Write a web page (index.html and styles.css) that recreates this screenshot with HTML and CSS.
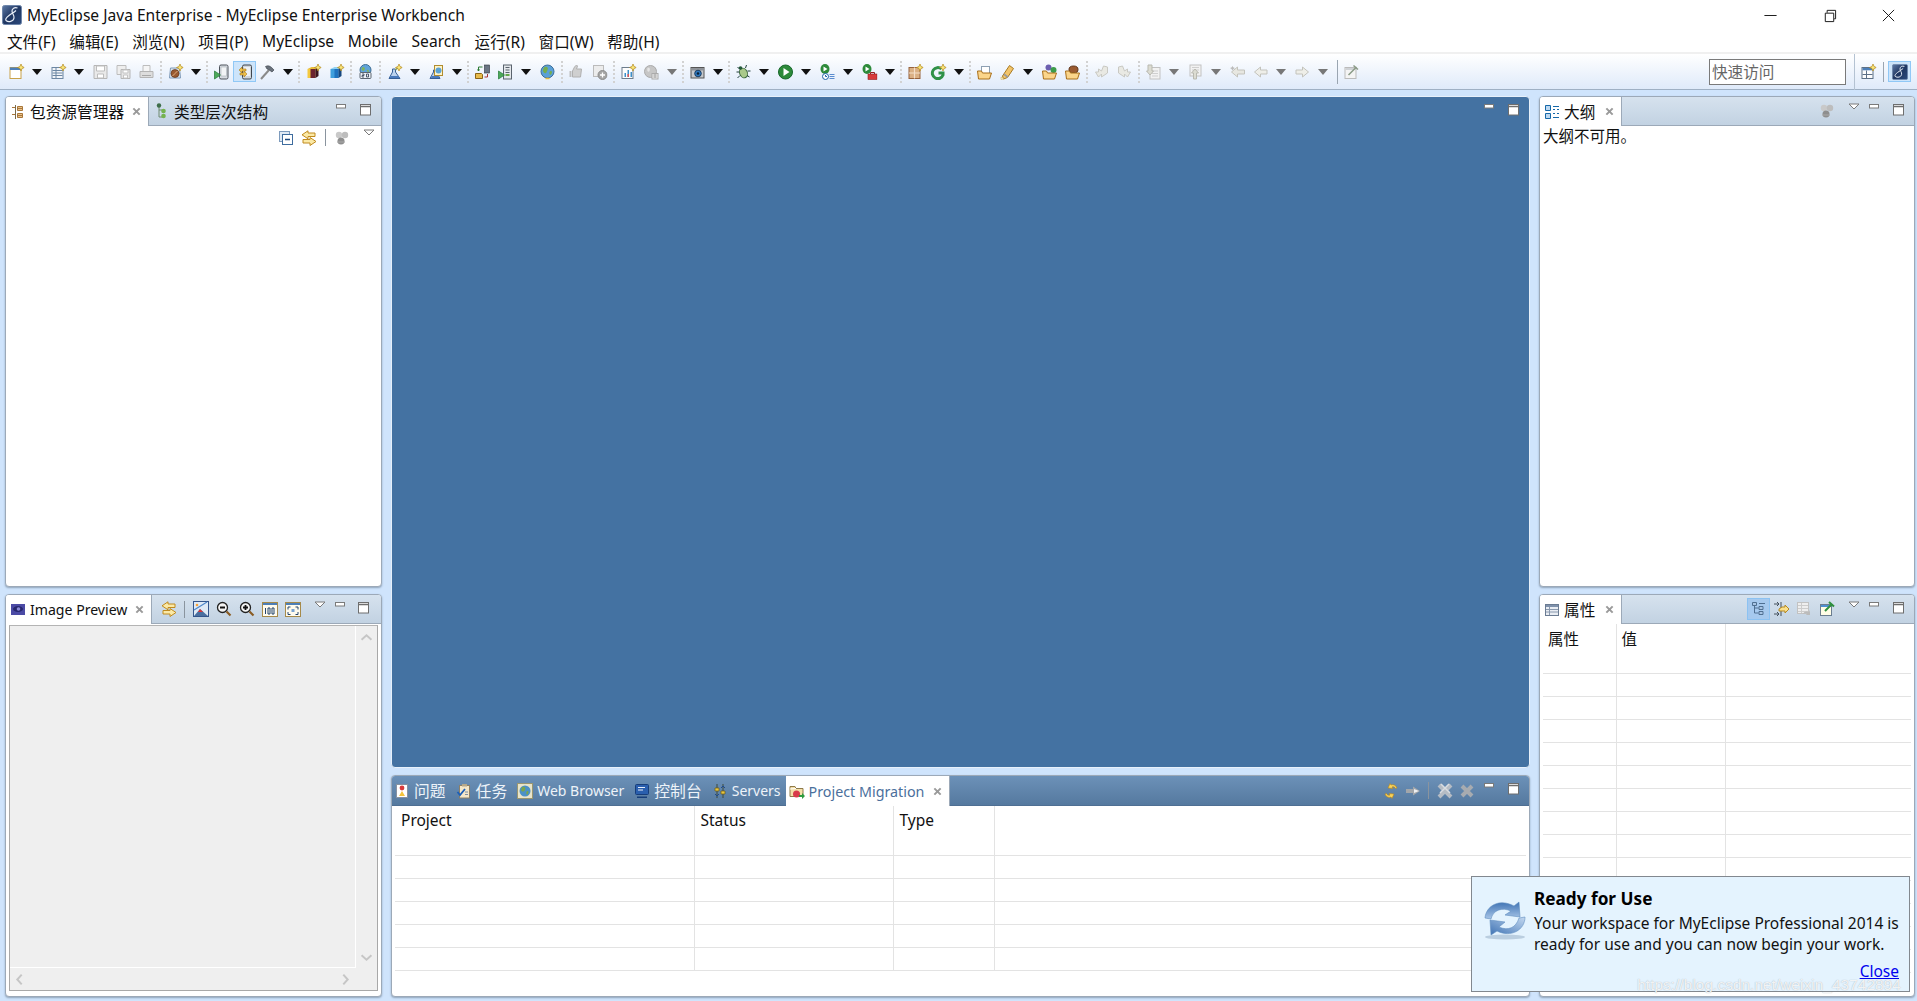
FILE: index.html
```html
<!DOCTYPE html>
<html lang="zh">
<head>
<meta charset="utf-8">
<title>MyEclipse Java Enterprise - MyEclipse Enterprise Workbench</title>
<link rel="stylesheet" href="styles.css">
</head>
<body>
<svg class="sprite" xmlns="http://www.w3.org/2000/svg">
<defs>
<linearGradient id="gBlue" x1="0" y1="0" x2="0" y2="1"><stop offset="0" stop-color="#3f73b4"/><stop offset="1" stop-color="#a9c6e8"/></linearGradient>
<linearGradient id="gBlue2" x1="0" y1="1" x2="1" y2="0"><stop offset="0" stop-color="#3f73b4"/><stop offset="1" stop-color="#c3d8f0"/></linearGradient>
<linearGradient id="gLogo" x1="0" y1="0" x2="1" y2="1"><stop offset="0" stop-color="#5e7aa6"/><stop offset=".5" stop-color="#1f3661"/><stop offset="1" stop-color="#2c4a7c"/></linearGradient>
<symbol id="star" viewBox="0 0 16 16"><path d="M12.5 0l1 2.500 2.500 1-2.500 1-1 2.500-1-2.500-2.500-1 2.500-1z" fill="#fbe77a" stroke="#b58a1e" stroke-width=".7"/></symbol>
<symbol id="new" viewBox="0 0 16 16"><rect x="1.500" y="3.500" width="11" height="11" fill="#fff" stroke="#c9a24a"/><rect x="1.500" y="3.500" width="11" height="2.500" fill="#4d7fb8"/><use href="#star"/></symbol>
<symbol id="newt" viewBox="0 0 16 16"><rect x="1.500" y="3.500" width="11" height="11" fill="#f2f5f9" stroke="#6d87a3"/><path d="M2 6.500h10M2 9h10M2 11.500h10M5.500 4v10" stroke="#6d87a3"/><use href="#star"/></symbol>
<symbol id="save" viewBox="0 0 16 16"><path d="M1.500 1.500h13v13h-13z" fill="#e9e9e9" stroke="#b6b6b6"/><path d="M4 2h8v5H4zM5 10h6v4H5z" fill="#fff" stroke="#bdbdbd"/></symbol>
<symbol id="saveall" viewBox="0 0 16 16"><path d="M1.500 1.500h9v9h-9z" fill="#eee" stroke="#bdbdbd"/><path d="M5.500 5.500h9v9h-9z" fill="#e6e6e6" stroke="#b6b6b6"/><path d="M7.500 6h5v3h-5zM8 11h4v3H8z" fill="#fff" stroke="#c4c4c4"/></symbol>
<symbol id="print" viewBox="0 0 16 16"><path d="M4.500 1.500h7v6h-7z" fill="#f5f5f5" stroke="#bdbdbd"/><path d="M1.500 7.500h13v6h-13z" fill="#ddd" stroke="#b4b4b4"/><path d="M3.500 11.500h9" stroke="#a8a8a8"/></symbol>
<symbol id="bean" viewBox="0 0 16 16"><path d="M3 4h9l1 10H2z" fill="#dbe8f4" stroke="#7f9ab8"/><ellipse cx="7.500" cy="9.500" rx="4" ry="4" fill="#9a5a30" stroke="#5f3419" stroke-width=".7"/><path d="M5 12c2-2 3-3 5-5" stroke="#e0b080" fill="none"/><use href="#star"/></symbol>
<symbol id="phrun" viewBox="0 0 16 16"><rect x="6" y="1" width="8.500" height="14" rx="1.500" fill="#d7dce2" stroke="#4c525a"/><rect x="7.500" y="3" width="5.500" height="9" fill="#f2f4f6" stroke="#9aa2aa" stroke-width=".5"/><path d="M1 7l6 4-6 4z" fill="#4ea85a" stroke="#1f7a34" stroke-width=".7"/></symbol>
<symbol id="phsync" viewBox="0 0 16 16"><rect x="5.500" y="1" width="9" height="14" rx="1.500" fill="#cfd5db" stroke="#3f454d"/><rect x="7" y="3" width="6" height="9" fill="#eef1f4"/><path d="M2 6l3-3v2h4v2H5v2zM10 10l-3 3v-2H3v-2h4V7z" fill="#f1c24a" stroke="#a7791a" stroke-width=".6"/></symbol>
<symbol id="hammer" viewBox="0 0 16 16"><path d="M1.500 15l8-9" stroke="#8a8a8a" stroke-width="2"/><path d="M6 2.500c3-1.500 5-.5 8.500 3.500l-2 2L9 5.500 7.500 5z" fill="#69717b" stroke="#383d44" stroke-width=".6"/></symbol>
<symbol id="cubeb" viewBox="0 0 16 16"><path d="M2 5l4-2h7l-3 2z" fill="#e7bb3b"/><path d="M2 5h8v9H2z" fill="#f4c93f"/><path d="M5 5h5v9H5z" fill="#6c2430"/><path d="M10 5l3-2v9l-3 2z" fill="#3b1620"/><use href="#star"/></symbol>
<symbol id="cubeu" viewBox="0 0 16 16"><path d="M2 5l4-2h7l-3 2z" fill="#8fd0f2"/><path d="M2 5h8v9H2z" fill="#3f9fdd"/><path d="M6 5h4v9H6z" fill="#1f73bf"/><path d="M10 5l3-2v9l-3 2z" fill="#17487f"/><use href="#star"/></symbol>
<symbol id="web2" viewBox="0 0 16 16"><circle cx="8" cy="6" r="5.500" fill="#5fa3d9" stroke="#3f6e94"/><path d="M5 3c2 0 3 1 2 3s-3 0-3-1zM9 6c2-1 3 1 2 3z" fill="#7fb45a"/><rect x="2.500" y="8.500" width="11" height="6" rx="1" fill="#eef1f5" stroke="#5c6670"/><path d="M4.500 10h2v1.500h-2V13h2M9 10h2v3H9z" fill="none" stroke="#2b3b4f" stroke-width=".8"/></symbol>
<symbol id="flask" viewBox="0 0 16 16"><path d="M6 5h3v3l4.500 6.500h-11L6 8z" fill="#bcd3ee" stroke="#365f96"/><path d="M4 12h8l1 2H3z" fill="#4a7abc"/><path d="M9 6l3-3" stroke="#8fa65a" stroke-width="1.500"/><use href="#star"/></symbol>
<symbol id="flask2" viewBox="0 0 16 16"><path d="M5 8L1.500 14.500h10L8 8V6H5z" fill="#c3d6ee" stroke="#365f96"/><path d="M3 12h7l1 2H2.500z" fill="#4a7abc"/><rect x="6" y="1.500" width="8" height="10" fill="#fdf3c9" stroke="#b18d2f"/><circle cx="10" cy="6.500" r="3" fill="#5ba3d3"/></symbol>
<symbol id="deploy" viewBox="0 0 16 16"><rect x="10" y="1" width="5" height="8" fill="#6a7584" stroke="#2c333c" stroke-width=".6"/><path d="M1 9.500h6l1 1v4H1z" fill="#e7bb4b" stroke="#8a6417"/><path d="M8 3H4v4M3 5.500L4 7l1-1.500" fill="none" stroke="#2c7a33"/><path d="M10 13h3v-3" fill="none" stroke="#a33"/></symbol>
<symbol id="srun" viewBox="0 0 16 16"><rect x="6" y="1" width="8" height="14" fill="#e4e8ec" stroke="#59626d"/><path d="M8 3.500h4M8 6h4M8 8.500h4" stroke="#59626d"/><rect x="8" y="10" width="4" height="2" fill="#66a64a"/><path d="M1 7l6 4-6 4z" fill="#4ea85a" stroke="#1f7a34" stroke-width=".7"/></symbol>
<symbol id="globe" viewBox="0 0 16 16"><circle cx="8" cy="7.500" r="6.500" fill="#5aa0d8" stroke="#3d6f9a"/><path d="M5 3c3-1 4 1 3 3s-1 4-3 3-2-4 0-6zM11 7c2 0 2 2 0 4-1 0-2-3 0-4z" fill="#76ad4e"/><path d="M6 14.500h4" stroke="#e7bb3b" stroke-width="1.500"/></symbol>
<symbol id="thumb" viewBox="0 0 16 16"><path d="M6 3l2-2 1 1-1 3h5l-1 8H4V7z" fill="#cfcfcf" stroke="#b0b0b0"/><path d="M1 7h2v6H1z" fill="#bdbdbd"/></symbol>
<symbol id="gearg" viewBox="0 0 16 16"><rect x="2" y="1.500" width="10" height="11" fill="#ececec" stroke="#bbb"/><circle cx="11" cy="11" r="4.500" fill="#a5a5a5" stroke="#8c8c8c"/><path d="M11 8.500v5M8.500 11h5" stroke="#fff" stroke-width="1.300"/></symbol>
<symbol id="chart" viewBox="0 0 16 16"><rect x="1.500" y="3.500" width="11" height="11" fill="#fdfdfd" stroke="#6d7d8d"/><path d="M4 13V9h1.500v4zM7 13V6h1.500v7zM10 13V8h1.500v5z" fill="#3c8fc9"/><path d="M7 13v-3h1.500v3z" fill="#d55"/><use href="#star"/></symbol>
<symbol id="glg" viewBox="0 0 16 16"><circle cx="7" cy="7.500" r="6" fill="#c6c6c6" stroke="#aaa"/><path d="M4 4c2-1 3 1 2 3s-3 0-2-3z" fill="#e5e5e5"/><rect x="8.500" y="9.500" width="6" height="5.500" fill="#eee" stroke="#aaa"/><path d="M10 11h3M10 13h3" stroke="#888"/></symbol>
<symbol id="cam" viewBox="0 0 16 16"><rect x="1.500" y="3.500" width="13" height="10.500" fill="#c7c9cc" stroke="#555"/><rect x="2" y="4" width="12" height="2.500" fill="#8e9298"/><circle cx="8.500" cy="9.500" r="3.300" fill="#2f78bf" stroke="#1c3f63"/><circle cx="8.500" cy="9.500" r="1.300" fill="#0b1f33"/></symbol>
<symbol id="bug" viewBox="0 0 16 16"><ellipse cx="8" cy="9" rx="3.800" ry="5" fill="#a9c98a" stroke="#3d6b3a" transform="rotate(-25 8 9)"/><circle cx="5" cy="4" r="1.800" fill="#245a3a"/><path d="M2 3l2 2M1 8h3M2 14l2.500-2.500M11 1l-1 3M15 7h-3M14 13l-2.500-1.500" stroke="#1e3f3a"/></symbol>
<symbol id="play" viewBox="0 0 16 16"><circle cx="8" cy="8" r="7" fill="#2d8a3a" stroke="#16672a"/><path d="M6 4l6 4-6 4z" fill="#fff"/></symbol>
<symbol id="playc" viewBox="0 0 16 16"><ellipse cx="5.500" cy="5" rx="4.500" ry="5" fill="#2d8a3a"/><path d="M4 2.500l4 2.500-4 2.500z" fill="#fff"/><circle cx="6" cy="12.500" r="3" fill="#fff" stroke="#1d62a8"/><path d="M6 11v1.500h1.500" stroke="#1d62a8" fill="none"/><path d="M10 10.500h5M10 12.500h5M10 14.500h5" stroke="#5a8ccf"/></symbol>
<symbol id="playt" viewBox="0 0 16 16"><ellipse cx="5.500" cy="5" rx="4.500" ry="5" fill="#2d8a3a"/><path d="M4 2.500l4 2.500-4 2.500z" fill="#fff"/><rect x="6.500" y="10" width="9" height="5.500" fill="#d83b3b" stroke="#8f1f1f" stroke-width=".6"/><path d="M9 10V8.500h4V10" fill="none" stroke="#8f1f1f"/></symbol>
<symbol id="grid" viewBox="0 0 16 16"><rect x="1.500" y="3.500" width="11" height="11" fill="#dab084" stroke="#96623c"/><path d="M7 3.500v11M1.500 9h11" stroke="#f5dfc8" stroke-width="1.200"/><use href="#star"/></symbol>
<symbol id="gstar" viewBox="0 0 16 16"><path d="M11 5A5.500 5.500 0 1 0 12.500 11V9H8" fill="none" stroke="#2f9147" stroke-width="3"/><use href="#star"/></symbol>
<symbol id="fold" viewBox="0 0 16 16"><rect x="5" y="2.500" width="8" height="7" fill="#fff" stroke="#8ea0b3"/><path d="M1 7h4l1 2h9l-2 6H2z" fill="#fbd58a" stroke="#a86e18"/></symbol>
<symbol id="pen" viewBox="0 0 16 16"><path d="M10 1.500l4 3-6 9-4 1.500-1-3z" fill="#f2c46a" stroke="#a87a22"/><path d="M4 11l4 3 1-1.500-4-3z" fill="#9a9a9a"/><path d="M1.500 13l3 2-3 .5z" fill="#fff6c9" stroke="#c9a850" stroke-width=".5"/></symbol>
<symbol id="foldb" viewBox="0 0 16 16"><circle cx="7" cy="3.500" r="3" fill="#6c5fb0"/><circle cx="12" cy="6" r="3" fill="#3d9c4a"/><path d="M1 7h4l1 2h9l-2 6H2z" fill="#fbd58a" stroke="#a86e18"/></symbol>
<symbol id="foldj" viewBox="0 0 16 16"><ellipse cx="9" cy="5.500" rx="4.500" ry="3.500" fill="#9a5a30" stroke="#5f3419"/><path d="M1 7h4l1 2h9l-2 6H2z" fill="#fbd58a" stroke="#a86e18"/></symbol>
<symbol id="backg" viewBox="0 0 16 16"><path d="M10 2l4 1v6l-6 4v-3L5 13 2 8h3V5l3 2z" fill="#e9e9e3" stroke="#c9c9c3"/></symbol>
<symbol id="fwdg" viewBox="0 0 16 16"><path d="M6 2L2 3v6l6 4v-3l3 3 3-5h-3V5L8 7z" fill="#e9e9e3" stroke="#c9c9c3"/></symbol>
<symbol id="dn" viewBox="0 0 16 16"><rect x="4.500" y="3.500" width="10" height="11.500" fill="#f2f2f2" stroke="#c2c2c2"/><path d="M6.500 7h6M6.500 9.500h6M6.500 12h6" stroke="#cfcfcf"/><path d="M2.500 1v6H1l3.500 4L8 7H6.500V1z" fill="#dcdcd2" stroke="#b9b9b0"/></symbol>
<symbol id="up" viewBox="0 0 16 16"><rect x="2.500" y="1" width="11" height="11" fill="#f2f2f2" stroke="#c2c2c2"/><path d="M4.500 3.500h7M4.500 6h7" stroke="#cfcfcf"/><path d="M6 15V9H4l3.500-4L11 9H9v6z" fill="#dcdcd2" stroke="#b9b9b0"/></symbol>
<symbol id="lfs" viewBox="0 0 16 16"><path d="M8 3v3h7v4H8v3L2 8z" fill="#e7e7e1" stroke="#c3c3bc"/><path d="M3 2l1 1.500L5.500 4 4 5 3 6.500 2 5 .5 4 2 3.500z" fill="#bbb"/></symbol>
<symbol id="lf" viewBox="0 0 16 16"><path d="M8 3v3h6.500v4H8v3L2 8z" fill="#eeeee8" stroke="#c3c3bc"/></symbol>
<symbol id="rt" viewBox="0 0 16 16"><path d="M8 3v3H1.500v4H8v3l6-5z" fill="#eeeee8" stroke="#c3c3bc"/></symbol>
<symbol id="pinw" viewBox="0 0 16 16"><rect x="1.500" y="3.500" width="11" height="11" fill="#f4f4f4" stroke="#bbb"/><rect x="2" y="4" width="10" height="2" fill="#cfd2d6"/><path d="M5 11l8-8M10 1.500l4.500 4" stroke="#8a9a86" stroke-width="1.500"/></symbol>
<symbol id="persp" viewBox="0 0 16 16"><rect x="1.500" y="3.500" width="11" height="11" fill="#fdfdfd" stroke="#5d7086"/><rect x="2" y="4" width="10" height="2.300" fill="#4d7fb8"/><path d="M6 6.500v8M2 10.500h10" stroke="#5d7086"/><use href="#star"/></symbol>
<symbol id="logo" viewBox="0 0 20 20"><rect x=".5" y=".5" width="19" height="19" rx="2" fill="url(#gLogo)" stroke="#6f86aa"/><path d="M15.500 3c-3-1-5.500.5-5.500 3 0 3 2.500 4 2 7-.5 3.500-5.500 4.500-8 2.500-1-1.500 1-3.500 3-5 2-1.500 5-3 7-5" fill="none" stroke="#e8eef7" stroke-width="1.200"/></symbol>
<symbol id="pkg" viewBox="0 0 16 16"><path d="M5.500 1v14" stroke="#7b6b4a"/><path d="M7.500 2.500h5v4h-5zM7.500 9.500h5v4h-5zM2 3.500h3M2 10.500h3" fill="#e9c48d" stroke="#a9773a"/><path d="M7.500 4.500h5M7.500 11.500h5" stroke="#a9773a"/></symbol>
<symbol id="hier" viewBox="0 0 16 16"><path d="M5 2v12h3M5 7h3" fill="none" stroke="#6f8a6f"/><circle cx="5" cy="2.500" r="2.200" fill="#3e6e49"/><circle cx="9.500" cy="8" r="2.300" fill="#74b24e"/><circle cx="9.500" cy="13" r="2.300" fill="#74b24e"/></symbol>
<symbol id="coll" viewBox="0 0 16 16"><rect x="1.500" y="1.500" width="10" height="10" fill="#dfe9f4" stroke="#7d9bbd"/><rect x="4.500" y="4.500" width="10" height="10" fill="#fff" stroke="#3e6c9e"/><path d="M7 9.500h5" stroke="#1d4a7f" stroke-width="1.500"/></symbol>
<symbol id="link" viewBox="0 0 16 16"><path d="M7 .8L1 4.800l6 4V6.500h7V3H7zM9 7.500l6 4-6 4v-2.500H2V9.500h7z" fill="#fbe9a6" stroke="#c08a1e"/></symbol>
<symbol id="balls" viewBox="0 0 16 16"><circle cx="5" cy="5" r="3.200" fill="#c9c9c9"/><circle cx="11" cy="5" r="3.200" fill="#bdbdbd"/><circle cx="7" cy="11" r="3.500" fill="#8e8e8e"/><path d="M3 12h8" stroke="#aaa"/></symbol>
<symbol id="syncy" viewBox="0 0 16 16"><path d="M14 5c-1-3-4-4-6-3L7 .5 5 5l5 .5-1-1.500c1.500-.5 3 0 3.500 1.500z" fill="#f8d25a" stroke="#b9861a" stroke-width=".6"/><path d="M2 11c1 3 4 4 6 3l1 1.500 2-4.500-5-.5 1 1.500c-1.500.5-3 0-3.500-1.500z" fill="#f8d25a" stroke="#b9861a" stroke-width=".6"/></symbol>
<symbol id="arrg" viewBox="0 0 16 16"><path d="M1 6h7V3.500L15 8l-7 4.500V10H1z" fill="#a2a6aa"/><path d="M9 6l5 2-5 2z" fill="#eef0f2"/></symbol>
<symbol id="xx" viewBox="0 0 16 16"><path d="M2 2l12 12M14 2L2 14" stroke="#b5bcc4" stroke-width="4"/><path d="M4 1l9 9M12 1L3 10" stroke="#d9dde1" stroke-width="1.500"/></symbol>
<symbol id="xg" viewBox="0 0 14 14"><path d="M2 2l10 10M12 2L2 12" stroke="#a7abb0" stroke-width="4"/></symbol>
<symbol id="eye" viewBox="0 0 16 16"><rect x="1" y="2" width="14" height="11" fill="#4b4aa5"/><ellipse cx="8" cy="7" rx="5" ry="3" fill="#27276f"/><circle cx="8.500" cy="7" r="1.800" fill="#8a8ad8"/></symbol>
<symbol id="mnt" viewBox="0 0 16 16"><rect x=".5" y=".5" width="15" height="15" fill="#dfeaf6" stroke="#34558b"/><path d="M1 15l6-7 8 7z" fill="#4a6fa0"/><path d="M5 11l2-3 3 3z" fill="#d33"/><path d="M1 9L14 1" stroke="#4d86c9" stroke-width="1.300"/><circle cx="4" cy="4" r="1.300" fill="#f5a23a"/></symbol>
<symbol id="zo" viewBox="0 0 16 16"><circle cx="6.500" cy="6.500" r="5" fill="#f3f3f3" stroke="#222" stroke-width="1.300"/><path d="M4 6.500h5" stroke="#111" stroke-width="1.800"/><path d="M10.500 10.500l4 4" stroke="#8a5b22" stroke-width="2.200"/></symbol>
<symbol id="zi" viewBox="0 0 16 16"><circle cx="6.500" cy="6.500" r="5" fill="#f3f3f3" stroke="#222" stroke-width="1.300"/><path d="M4 6.500h5M6.500 4v5" stroke="#111" stroke-width="1.800"/><path d="M10.500 10.500l4 4" stroke="#8a5b22" stroke-width="2.200"/></symbol>
<symbol id="f100" viewBox="0 0 16 16"><rect x=".5" y="1.500" width="15" height="14" fill="#fffbee" stroke="#a68a4a"/><rect x="1" y="2" width="14" height="2" fill="#4d7fb8"/><path d="M3.500 7v6M6 7h2v6H6zM10 7h2v6h-2z" fill="none" stroke="#23446f"/></symbol>
<symbol id="ffit" viewBox="0 0 16 16"><rect x=".5" y="1.500" width="15" height="14" fill="#fffbee" stroke="#a68a4a"/><rect x="1" y="2" width="14" height="2" fill="#4d7fb8"/><path d="M3 6h2.500M3 6v2.500M13 6h-2.500M13 6v2.500M3 13.500h2.500M3 13.500V11M13 13.500h-2.500M13 13.500V11" fill="none" stroke="#23446f"/><rect x="6.500" y="8" width="3" height="3" fill="#7ba3d1"/></symbol>
<symbol id="outl" viewBox="0 0 16 16"><path d="M1.500 1.500h5v5h-5zM1.500 9.500h5v5h-5z" fill="#bcd8f1" stroke="#1668a8"/><path d="M9 2.500h6M9 5.500h2M13 5.500h2M9 9.500h2M13 9.500h2M9 13.500h6" stroke="#1668a8" stroke-width="1.200"/></symbol>
<symbol id="tbl" viewBox="0 0 16 16"><rect x="1.500" y="2.500" width="13" height="11" fill="#e9edf3" stroke="#6a7b92"/><rect x="2" y="3" width="12" height="2" fill="#7f91ab"/><path d="M2 7.500h12M2 10h12M5.500 5v8" stroke="#8a99ae"/></symbol>
<symbol id="ptree" viewBox="0 0 16 16"><path d="M3.500 3v9h4M3.500 7h4" fill="none" stroke="#4f6f91"/><path d="M1.500 1.500h4v3h-4zM8 5.500h4v3H8zM8 10.500h4v3H8z" fill="#a8c5e5" stroke="#4f6f91"/><path d="M8 2.500h6" stroke="#4f6f91"/></symbol>
<symbol id="parr" viewBox="0 0 16 16"><path d="M1 3h5M4 1l2 2-2 2M1 13h5M4 11l2 2-2 2M8 1v14" fill="none" stroke="#44505c"/><path d="M9 6h3V4l4 4-4 4v-2H6V8z" fill="#fbe08a" stroke="#b78a22"/></symbol>
<symbol id="undo" viewBox="0 0 16 16"><rect x="1.500" y="1.500" width="11" height="11" fill="#eee" stroke="#c2c2c2"/><path d="M2 4.500h10M2 7.500h10M2 10.500h10M5.500 2v10" stroke="#ccc"/><path d="M7 13c1-3 4-3 6-2l1-2v5h-4l1-1.500c-1-.5-3 0-3 .5z" fill="#bbb"/></symbol>
<symbol id="npin" viewBox="0 0 16 16"><rect x="1.500" y="3.500" width="11" height="11" fill="#fffde6" stroke="#6b7d8f"/><rect x="2" y="4" width="10" height="2" fill="#4d8fd0"/><path d="M6 10l7-7M10 1l5 4.500" stroke="#2f8f3f" stroke-width="2"/></symbol>
<symbol id="prob" viewBox="0 0 16 16"><rect x="2.500" y="1.500" width="11" height="13" fill="#fff" stroke="#8892a0"/><circle cx="8" cy="5" r="2.400" fill="#d93b3b"/><path d="M5 13l3-5 3 5z" fill="#f3c33c"/></symbol>
<symbol id="task" viewBox="0 0 16 16"><rect x="3.500" y="2.500" width="10" height="12.500" fill="#f4e7c8" stroke="#8c8068"/><rect x="6" y="1" width="5" height="2.500" fill="#b5a88a"/><path d="M1.500 9l2.500 3L9 6" fill="none" stroke="#1c5fb8" stroke-width="1.800"/><path d="M9 9h3M9 11.500h3" stroke="#7d8da1"/></symbol>
<symbol id="web" viewBox="0 0 16 16"><rect x=".5" y=".5" width="15" height="15" fill="#e9e4c9" stroke="#9a9670"/><circle cx="8" cy="8" r="5.500" fill="#4b91c7"/><path d="M5 4c3-1 4 1 3 3s-3 2-4 0zM10 8c2 0 2 2 0 4-1-1-1-3 0-4z" fill="#7aa54c"/></symbol>
<symbol id="cons" viewBox="0 0 16 16"><rect x="1.500" y="1.500" width="13" height="10" rx="1" fill="#2a5fae" stroke="#173e7a"/><path d="M4 4.500h7M4 7h5" stroke="#e5eefa"/><path d="M3 13.500h10v1.500H3z" fill="#173e7a"/></symbol>
<symbol id="srv" viewBox="0 0 16 16"><path d="M5 1v14M11 1v14" stroke="#3f4a3c"/><path d="M3 5h4v3H3zM9 8h4v3H9z" fill="#e7c53f" stroke="#6a5a18" stroke-width=".7"/><path d="M5 13l-2-2M5 13l2-2M11 3L9 5M11 3l2 2" stroke="#1f4a8c"/></symbol>
<symbol id="migr" viewBox="0 0 16 16"><path d="M1 3.500h5l1 2h7v8H1z" fill="#f4dfa9" stroke="#8f7a49"/><path d="M1 6l6-.5" stroke="#fff"/><circle cx="7.500" cy="11" r="3.500" fill="#d83b4b"/><path d="M10 12h3v-2l3 3-3 3v-2h-3z" fill="#2d9c3f"/></symbol>
<symbol id="x" viewBox="0 0 10 10"><path d="M1.500 1.500l7 7M8.500 1.500l-7 7" stroke="#9a9a9a" stroke-width="2.200"/></symbol>
<symbol id="min" viewBox="0 0 14 8"><rect x="1.500" y="1.500" width="9" height="3.500" fill="#fff" stroke="#7a7a7a"/></symbol>
<symbol id="max" viewBox="0 0 12 12"><rect x=".5" y=".5" width="10" height="10.500" fill="#fff" stroke="#6e6e6e"/><path d="M1 2.500h9" stroke="#6e6e6e" stroke-width="1.500"/></symbol>
<symbol id="chev" viewBox="0 0 12 7"><path d="M1 1h10L6 6z" fill="#fff" stroke="#7a7a7a"/></symbol>
<symbol id="refresh" viewBox="0 0 42 42"><ellipse cx="21" cy="39" rx="20" ry="2.500" fill="#9fb5cc" opacity=".6"/><path d="M1 20C2 8 15 0 30 8l5-4 1 15-15-2 6-4C18 9 9 12 7 21z" fill="url(#gBlue)" stroke="#5f8dc0" stroke-width=".6"/><path d="M41 19c0 13-14 21-28 14l-6 4-1-15 15 2-6 5c9 4 17 1 20-9z" fill="url(#gBlue2)" stroke="#5f8dc0" stroke-width=".6"/></symbol>
</defs>
</svg>

<div class="app">
  <header class="titlebar">
    <div class="title-left">
      <svg class="logo"><use href="#logo"/></svg>
      <span>MyEclipse Java Enterprise - MyEclipse Enterprise Workbench</span>
    </div>
    <div class="winbtns">
      <svg class="winbtn" viewBox="0 0 16 16"><path d="M1.500 8h13" stroke="#111" fill="none"/></svg>
      <svg class="winbtn" viewBox="0 0 16 16"><path d="M3.500 5.500h9v9h-9zM5.500 5V2.500h9v9H13" stroke="#111" fill="none"/></svg>
      <svg class="winbtn" viewBox="0 0 16 16"><path d="M2 2l12 12M14 2L2 14" stroke="#111" fill="none"/></svg>
    </div>
  </header>
  <nav class="menubar">
    <span>文件(F)</span><span>编辑(E)</span><span>浏览(N)</span><span>项目(P)</span><span>MyEclipse</span><span>Mobile</span><span>Search</span><span>运行(R)</span><span>窗口(W)</span><span>帮助(H)</span>
  </nav>
  <div class="toolbar">
    <div class="tools">
      <svg class="ic"><use href="#new"/></svg><i class="ar"></i>
      <svg class="ic"><use href="#newt"/></svg><i class="ar"></i>
      <svg class="ic"><use href="#save"/></svg><svg class="ic"><use href="#saveall"/></svg><svg class="ic"><use href="#print"/></svg><b class="sep"></b>
      <svg class="ic"><use href="#bean"/></svg><i class="ar"></i><b class="sep"></b>
      <svg class="ic"><use href="#phrun"/></svg><span class="ic on"><svg><use href="#phsync"/></svg></span><svg class="ic"><use href="#hammer"/></svg><i class="ar"></i><b class="sep"></b>
      <svg class="ic"><use href="#cubeb"/></svg><svg class="ic"><use href="#cubeu"/></svg><b class="sep"></b>
      <svg class="ic"><use href="#web2"/></svg><b class="sep"></b>
      <svg class="ic"><use href="#flask"/></svg><i class="ar"></i>
      <svg class="ic"><use href="#flask2"/></svg><i class="ar"></i><b class="sep"></b>
      <svg class="ic"><use href="#deploy"/></svg><svg class="ic"><use href="#srun"/></svg><i class="ar"></i>
      <svg class="ic"><use href="#globe"/></svg><b class="sep"></b>
      <svg class="ic"><use href="#thumb"/></svg><svg class="ic"><use href="#gearg"/></svg><b class="sep"></b>
      <svg class="ic"><use href="#chart"/></svg>
      <svg class="ic"><use href="#glg"/></svg><i class="ar dim"></i><b class="sep"></b>
      <svg class="ic"><use href="#cam"/></svg><i class="ar"></i><b class="sep"></b>
      <svg class="ic"><use href="#bug"/></svg><i class="ar"></i>
      <svg class="ic"><use href="#play"/></svg><i class="ar"></i>
      <svg class="ic"><use href="#playc"/></svg><i class="ar"></i>
      <svg class="ic"><use href="#playt"/></svg><i class="ar"></i><b class="sep"></b>
      <svg class="ic"><use href="#grid"/></svg>
      <svg class="ic"><use href="#gstar"/></svg><i class="ar"></i><b class="sep"></b>
      <svg class="ic"><use href="#fold"/></svg>
      <svg class="ic"><use href="#pen"/></svg><i class="ar"></i>
      <svg class="ic"><use href="#foldb"/></svg><svg class="ic"><use href="#foldj"/></svg><b class="sep"></b>
      <svg class="ic"><use href="#backg"/></svg><svg class="ic"><use href="#fwdg"/></svg><b class="sep"></b>
      <svg class="ic"><use href="#dn"/></svg><i class="ar dim"></i>
      <svg class="ic"><use href="#up"/></svg><i class="ar dim"></i>
      <svg class="ic"><use href="#lfs"/></svg><svg class="ic"><use href="#lf"/></svg><i class="ar dim"></i>
      <svg class="ic"><use href="#rt"/></svg><i class="ar dim"></i><b class="sep line"></b>
      <svg class="ic"><use href="#pinw"/></svg>
    </div>
    <div class="tools-right">
      <div class="quick">快速访问</div>
      <div class="persp">
        <svg class="ic"><use href="#persp"/></svg>
        <b class="sep line short"></b>
        <span class="ic on wide"><svg><use href="#logo"/></svg></span>
      </div>
    </div>
  </div>

  <main class="work">
    <div class="col col-side">
      <section class="panel grow-a">
        <div class="tabbar">
          <div class="tab active first"><svg class="ti"><use href="#pkg"/></svg><span>包资源管理器</span><svg class="cx"><use href="#x"/></svg></div>
          <div class="tab"><svg class="ti"><use href="#hier"/></svg><span>类型层次结构</span></div>
          <div class="bar-tools"><svg class="mn"><use href="#min"/></svg><svg class="mx"><use href="#max"/></svg></div>
        </div>
        <div class="subtools">
          <svg class="si"><use href="#coll"/></svg><svg class="si"><use href="#link"/></svg><b class="vl"></b><svg class="si"><use href="#balls"/></svg><svg class="ch"><use href="#chev"/></svg>
        </div>
      </section>
      <section class="panel grow-b">
        <div class="tabbar tall">
          <div class="tab active first img"><svg class="ti"><use href="#eye"/></svg><span class="latin">Image Preview</span><svg class="cx"><use href="#x"/></svg></div>
          <div class="bar-tools spread">
            <svg class="si"><use href="#link"/></svg><b class="vl"></b>
            <svg class="si"><use href="#mnt"/></svg><svg class="si"><use href="#zo"/></svg><svg class="si"><use href="#zi"/></svg><svg class="si"><use href="#f100"/></svg><svg class="si"><use href="#ffit"/></svg>
            <svg class="ch ch-bar"><use href="#chev"/></svg><svg class="mn"><use href="#min"/></svg><svg class="mx"><use href="#max"/></svg>
          </div>
        </div>
        <div class="preview">
          <div class="pv-main">
            <div class="pv-canvas"></div>
            <div class="pv-vs"><svg class="sb" viewBox="0 0 10 6"><path d="M.5 5L5 1l4.500 4" fill="none" stroke="#c6c6c6" stroke-width="1.800"/></svg><svg class="sb" viewBox="0 0 10 6"><path d="M.5 1L5 5l4.500-4" fill="none" stroke="#c6c6c6" stroke-width="1.800"/></svg></div>
          </div>
          <div class="pv-hs"><svg class="sb2" viewBox="0 0 6 10"><path d="M5 .5L1 5l4 4.500" fill="none" stroke="#c6c6c6" stroke-width="1.800"/></svg><svg class="sb2" viewBox="0 0 6 10"><path d="M1 .5L5 5 1 9.500" fill="none" stroke="#c6c6c6" stroke-width="1.800"/></svg></div>
        </div>
      </section>
    </div>

    <div class="col col-mid">
      <section class="editor">
        <svg class="mn"><use href="#min"/></svg><svg class="mx"><use href="#max"/></svg>
      </section>
      <section class="panel bottom">
        <div class="tabbar dark">
          <div class="dtab"><svg class="ti"><use href="#prob"/></svg><span>问题</span></div>
          <div class="dtab"><svg class="ti"><use href="#task"/></svg><span>任务</span></div>
          <div class="dtab"><svg class="ti"><use href="#web"/></svg><span class="latin">Web Browser</span></div>
          <div class="dtab"><svg class="ti"><use href="#cons"/></svg><span>控制台</span></div>
          <div class="dtab"><svg class="ti"><use href="#srv"/></svg><span class="latin">Servers</span></div>
          <div class="tab active migr"><svg class="ti"><use href="#migr"/></svg><span class="latin">Project Migration</span><svg class="cx"><use href="#x"/></svg></div>
          <div class="bar-tools dk">
            <svg class="si"><use href="#syncy"/></svg><svg class="si"><use href="#arrg"/></svg><b class="vl"></b><svg class="si"><use href="#xx"/></svg><svg class="sx"><use href="#xg"/></svg><svg class="mn"><use href="#min"/></svg><svg class="mx"><use href="#max"/></svg>
          </div>
        </div>
        <table class="grid mig">
          <colgroup><col class="c1"><col class="c2"><col class="c3"><col></colgroup>
          <tr class="head"><th>Project</th><th>Status</th><th>Type</th><th></th></tr>
          <tr><td></td><td></td><td></td><td></td></tr>
          <tr><td></td><td></td><td></td><td></td></tr>
          <tr><td></td><td></td><td></td><td></td></tr>
          <tr><td></td><td></td><td></td><td></td></tr>
          <tr><td></td><td></td><td></td><td></td></tr>
        </table>
      </section>
    </div>

    <div class="col col-side">
      <section class="panel grow-a">
        <div class="tabbar">
          <div class="tab active right-tab"><svg class="ti"><use href="#outl"/></svg><span>大纲</span><svg class="cx"><use href="#x"/></svg></div>
          <div class="bar-tools"><svg class="si"><use href="#balls"/></svg><svg class="ch ch-bar"><use href="#chev"/></svg><svg class="mn"><use href="#min"/></svg><svg class="mx"><use href="#max"/></svg></div>
        </div>
        <p class="msg">大纲不可用。</p>
      </section>
      <section class="panel grow-b">
        <div class="tabbar tall">
          <div class="tab active right-tab"><svg class="ti"><use href="#tbl"/></svg><span>属性</span><svg class="cx"><use href="#x"/></svg></div>
          <div class="bar-tools">
            <span class="tog"><svg><use href="#ptree"/></svg></span><svg class="si"><use href="#parr"/></svg><svg class="si"><use href="#undo"/></svg><svg class="si"><use href="#npin"/></svg>
            <svg class="ch ch-bar"><use href="#chev"/></svg><svg class="mn"><use href="#min"/></svg><svg class="mx"><use href="#max"/></svg>
          </div>
        </div>
        <table class="grid props">
          <colgroup><col class="p1"><col class="p2"><col></colgroup>
          <tr class="head"><th>属性</th><th>值</th><th></th></tr>
          <tr><td></td><td></td><td></td></tr><tr><td></td><td></td><td></td></tr><tr><td></td><td></td><td></td></tr>
          <tr><td></td><td></td><td></td></tr><tr><td></td><td></td><td></td></tr><tr><td></td><td></td><td></td></tr>
          <tr><td></td><td></td><td></td></tr><tr><td></td><td></td><td></td></tr><tr><td></td><td></td><td></td></tr>
          <tr><td></td><td></td><td></td></tr><tr><td></td><td></td><td></td></tr><tr><td></td><td></td><td></td></tr>
          <tr><td></td><td></td><td></td></tr>
        </table>
      </section>
    </div>
  </main>

  <aside class="toast">
    <svg class="toast-ic"><use href="#refresh"/></svg>
    <div class="toast-body">
      <h4>Ready for Use</h4>
      <p>Your workspace for MyEclipse Professional 2014 is<br>ready for use and you can now begin your work.</p>
      <a class="close-link">Close</a>
    </div>
    <span class="wm">https://blog.csdn.net/weixin_43742894</span>
  </aside>
</div>
</body>
</html>
```

FILE: styles.css
```css
* { box-sizing: border-box; }
html, body { margin: 0; height: 100%; overflow: hidden; }
body {
  font-family: "Noto Sans", "Noto Sans CJK SC", sans-serif;
  font-size: 15px;
  color: #111;
  background: #fff;
}
.sprite { position: absolute; width: 0; height: 0; }
svg { display: block; flex: none; overflow: visible; }

.app { position: relative; display: flex; flex-direction: column; width: 1917px; height: 1001px; }

.titlebar { height: 30px; flex: none; display: flex; justify-content: space-between; align-items: center; padding-left: 2px; background: #fff; }
.title-left { display: flex; align-items: center; gap: 5px; font-size: 15.600px; }
.logo { width: 20px; height: 20px; }
.winbtns { display: flex; gap: 44px; padding-right: 21px; }
.winbtn { width: 15px; height: 15px; }

.menubar { height: 22px; flex: none; display: flex; gap: 13.700px; align-items: center; padding-left: 7px; background: #fff; font-size: 15.600px; }

.toolbar {
  height: 38px; flex: none; display: flex; justify-content: space-between; align-items: center;
  padding-left: 5px; padding-right: 5px;
  border-top: 2px solid #f0f0f0; border-bottom: 1px solid #9fb0c4;
  background: linear-gradient(#ffffff, #dfeafa);
}
.tools, .tools-right, .persp { display: flex; align-items: center; }
.ic { width: 23px; height: 16px; padding: 0 3.5px; flex: none; }
.ic.on { height: 21px; padding: 0; display: flex; align-items: center; justify-content: center; background: #cde4fa; border: 1px solid #90c8f6; }
.ic.on svg { width: 16px; height: 16px; }
.ic.wide { width: 23px; }
.ar { width: 17px; height: 6px; flex: none; position: relative; }
.ar::before { content: ""; position: absolute; left: 4px; top: 0; border: 5px solid transparent; border-top: 6px solid #111; border-bottom: 0; }
.ar.dim::before { border-top-color: #777; }
.ar + .ic { margin-left: 2px; }
.sep { width: 6px; height: 22px; flex: none; border-left: 2px dotted #d2d2d2; margin-left: 2px; margin-right: -2px; }
.sep.line { width: 1px; height: 24px; border-left: 1px solid #9aa5b1; margin: 0 2px 0 6px; }
.sep.short { width: 1px; height: 20px; margin: 0 4px 0 3px; }
.quick { width: 137px; height: 26px; border: 1px solid #7a7a7a; background: #fff; color: #666; line-height: 24px; padding-left: 2px; font-size: 15.600px; }
.persp { height: 36px; margin-left: 8px; padding-left: 2px; padding-right: 1px; border-left: 1px solid #b4c2d2; }

.work { flex: 1; min-height: 0; display: grid; grid-template-columns: 377px 1139px 376px; column-gap: 9px; padding: 6px 2px 4px 5px; background: #cfe4fc; }
.col { display: flex; flex-direction: column; gap: 7px; min-height: 0; }
.panel { position: relative; display: flex; flex-direction: column; background: #fff; border: 1px solid #9ca9b8; border-radius: 4px; overflow: hidden; box-shadow: 0 1px 2px #8fa3ba; }
.grow-a { height: 491px; }
.grow-b { height: 403px; }

.tabbar { height: 29px; flex: none; display: flex; align-items: stretch; background: linear-gradient(#d6e2ee, #c2d2e2); border-bottom: 1px solid #9ca9b8; }
.tabbar.tall { height: 29px; }
.tab { display: flex; align-items: center; background: #fff; margin-bottom: -1px; position: relative; padding-left: 4px; }
.tab span { margin-left: 4px; font-size: 15.700px; white-space: nowrap; }
.tab span.latin { font-size: 14.100px; }
.tab:not(.active) { padding-left: 5px; margin-left: 0; background: transparent; margin-bottom: 0; }
.tab.active { border-right: 1px solid #9ca9b8; }
.first { width: 143px; }
.img { width: 146px; }
.right-tab { width: 82px; padding-left: 4px; }
.migr { width: 164px; padding-left: 3px; border-left: 0; }
.migr span.latin { color: #4b6f9c; font-size: 14.300px; }
.ti { width: 16px; height: 16px; }
.cx { width: 9px; height: 9px; margin-left: auto; margin-right: 7px; }
.bar-tools { margin-left: auto; display: flex; align-items: center; padding-right: 9px; position: relative; }
.mn { width: 14px; height: 8px; margin-left: 8px; align-self: flex-start; margin-top: 6px; }
.mx { width: 12px; height: 12px; margin-left: 11px; align-self: flex-start; margin-top: 7px; }
.si { width: 16px; height: 16px; margin-right: 7px; }
.sx { width: 14px; height: 14px; margin-left: 1px; }
.vl { width: 1px; height: 17px; background: #8a949e; margin-right: 8px; flex: none; }
.ch { width: 12px; height: 7px; }
.ch-bar { align-self: flex-start; margin-top: 6px; margin-left: 6px; }

.subtools { display: flex; align-items: center; justify-content: flex-end; padding: 0 6px 0 0; height: 23px; }
.subtools .si { margin-left: 0; }
.subtools .ch { align-self: flex-start; margin-left: 6px; margin-top: 3px; }
.subtools .vl { margin-left: 1px; }
.spread { margin-left: 9px; padding-right: 9px; flex: 1; }
.spread .mn { margin-left: 8px; }
.spread .mx { margin-left: 10px; }

.preview { flex: 1; min-height: 0; margin: 1px 3px 5px 3px; display: flex; flex-direction: column; background: #efefef; border: 1px solid #a8a8a8; border-top-color: #b4b4b4; }
.pv-main { flex: 1; min-height: 0; display: flex; }
.pv-canvas { flex: 1; border-right: 1px solid #fff; border-bottom: 1px solid #fff; }
.pv-vs { width: 21px; display: flex; flex-direction: column; justify-content: space-between; align-items: center; padding: 8px 0 7px; }
.sb { width: 11px; height: 7px; }
.pv-hs { height: 22px; flex: none; display: flex; justify-content: space-between; align-items: center; padding: 0 28px 0 6px; }
.sb2 { width: 7px; height: 11px; }

.editor { height: 672px; flex: none; display: flex; justify-content: flex-end; background: #4472a2; border: 1px solid #e7f0fa; border-radius: 4px; padding-right: 9px; }
.bottom { height: 222px; flex: none; }
.tabbar.dark { height: 30px; background: linear-gradient(#6c91b8, #55799f); border-bottom: 1px solid #4f6f93; padding-left: 2px; }
.dtab { display: flex; align-items: center; gap: 4px; color: #edf3f9; margin-right: 10px; }
.dtab span { font-size: 15.800px; white-space: nowrap; }
.dtab span.latin { font-size: 14px; }
.dtab:nth-child(5) { margin-right: 5px; }
.dk { padding-right: 9px; }
.dk .si { margin-right: 6px; }
.dk .si + .vl { margin-left: 1px; }
.dk .mn { margin-left: 9px; }

.grid { width: calc(100% - 6px); margin: 0 3px; border-collapse: collapse; table-layout: fixed; }
.grid th { height: 49px; padding: 3px 0 0 6px; text-align: left; vertical-align: top; font-weight: 400; font-size: 15.500px; color: #111; border-right: 1px solid #e3e3e3; border-bottom: 1px solid #e3e3e3; }
.grid td { height: 23px; padding: 0; border-right: 1px solid #e3e3e3; border-bottom: 1px solid #e3e3e3; }
.grid th:last-child, .grid td:last-child { border-right: 0; }
.c1 { width: 299px; }
.c2 { width: 199px; }
.c3 { width: 101px; }
.p1 { width: 73px; }
.p2 { width: 109px; }
.props th { padding-left: 5px; }

.msg { margin: 0 0 0 3px; font-size: 15.500px; line-height: 20px; }

.tog { width: 23px; height: 22px; display: flex; align-items: center; justify-content: center; background: #a6c9ee; border: 1px solid #8cc2f2; margin-right: 3px; }
.tog svg { width: 16px; height: 16px; }

.toast { position: absolute; left: 1471px; top: 876px; width: 439px; height: 116px; display: flex; background: #e4f3fe; border: 1px solid #82888f; padding: 21px 0 0 12px; }
.toast-ic { width: 42px; height: 42px; }
.toast-body { margin-left: 8px; flex: 1; margin-top: -10px; position: relative; padding-right: 10px; }
.toast-body h4 { margin: 0; font-size: 17.200px; font-weight: 700; line-height: 22px; color: #000; }
.toast-body p { margin: 3px 0 0; font-size: 15.500px; line-height: 21px; color: #111; white-space: nowrap; }
.close-link { display: block; text-align: right; font-size: 15.500px; line-height: 13px; margin-top: 10px; color: #0000ee; text-decoration: underline; }
.wm { position: absolute; left: 165px; top: 102px; font-family: "Liberation Sans", sans-serif; font-size: 15.500px; line-height: 12px; color: rgba(255,255,255,.85); white-space: nowrap; text-shadow: 0 0 1px rgba(150,160,170,.9); }
```
